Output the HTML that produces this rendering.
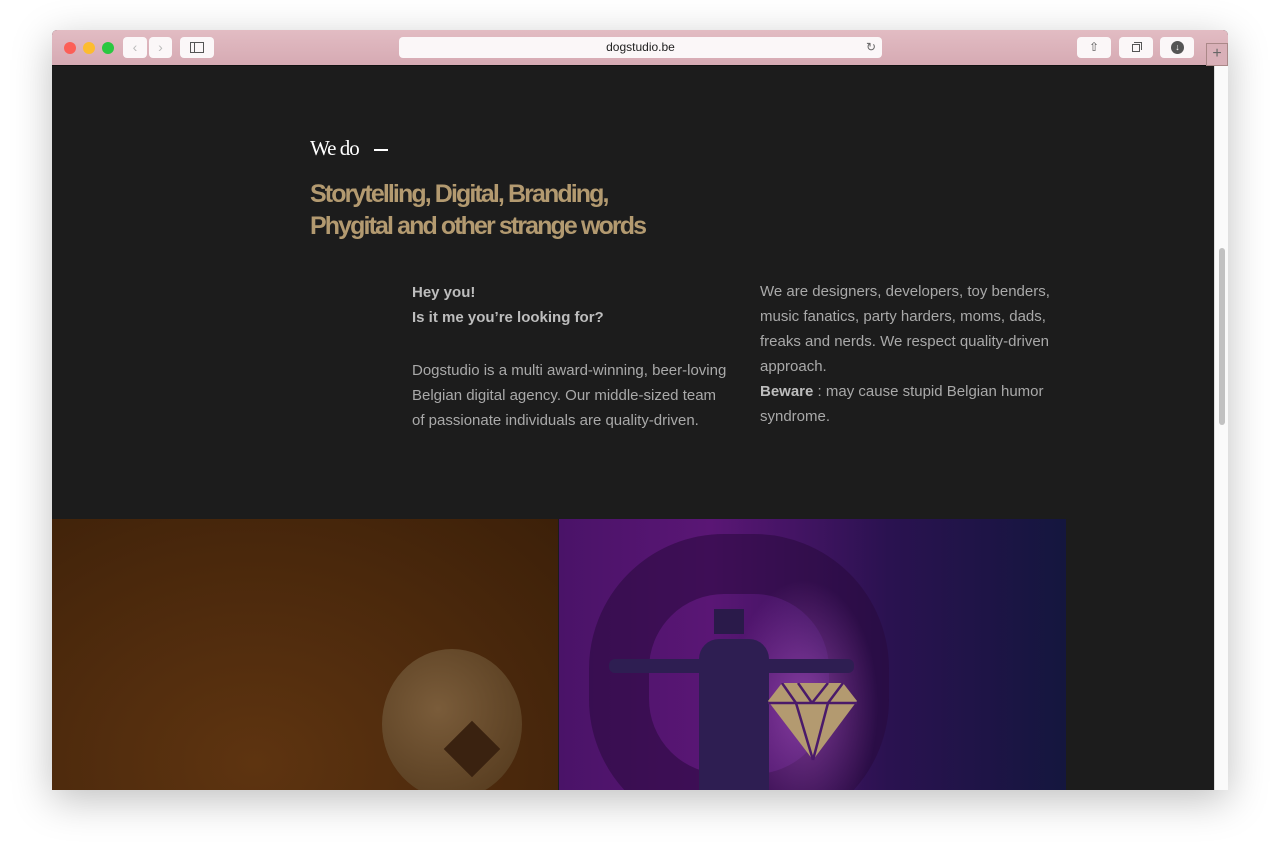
<!DOCTYPE html>
<html><head><meta charset="utf-8"><style>
*{margin:0;padding:0;box-sizing:border-box}
body{width:1280px;height:864px;background:#fff;position:relative;overflow:hidden;font-family:"Liberation Sans",sans-serif}
.win{position:absolute;left:52px;top:30px;width:1176px;height:760px;box-shadow:0 10px 40px rgba(0,0,0,.25);border-radius:5px 5px 0 0;overflow:hidden;background:#1c1c1c}
.bar{position:absolute;left:0;top:0;width:1176px;height:36px;background:linear-gradient(#e2bcc3,#d6aab3);border-bottom:1px solid #111}
.dot{position:absolute;top:12px;width:12px;height:12px;border-radius:50%}
.btn{position:absolute;top:7px;height:21px;background:#fbf7f8;border-radius:4px}
.url{position:absolute;left:347px;top:7px;width:483px;height:21px;background:#fbf7f8;border-radius:4px;font-size:12px;text-align:center;line-height:21px;color:#222}
.content{position:absolute;left:0;top:36px;width:1162px;height:724px;background:#1c1c1c}
.sb{position:absolute;left:1162px;top:36px;width:14px;height:724px;background:#fafafa;border-left:1px solid #ddd}
.thumb{position:absolute;left:4px;top:182px;width:6px;height:177px;border-radius:3px;background:#c1c1c1}
.wedo{position:absolute;left:258px;top:70px;font-family:"Liberation Serif",serif;font-size:21px;color:#fff;letter-spacing:-1px}
.dash{position:absolute;left:322px;top:83px;width:14px;height:2px;background:#fff}
.h{position:absolute;left:258px;top:112px;font-size:25px;font-weight:bold;color:#b39a70;line-height:32px;letter-spacing:-1.9px}
.p{position:absolute;font-size:15px;line-height:25px;color:#a9a9a9}
.p b{color:#bdbdbd}
</style></head><body>
<div class="win">
<div class="bar">
<div class="dot" style="left:12px;background:#fc5f57"></div>
<div class="dot" style="left:31px;background:#fdbc2e"></div>
<div class="dot" style="left:50px;background:#29c840"></div>
<div class="btn" style="left:71px;width:24px;color:#bbb;font-size:14px;text-align:center;line-height:21px">‹</div>
<div class="btn" style="left:97px;width:23px;color:#bbb;font-size:14px;text-align:center;line-height:21px">›</div>
<div class="btn" style="left:128px;width:34px"><div style="position:absolute;left:10px;top:5px;width:14px;height:11px;border:1px solid #555"></div><div style="position:absolute;left:14px;top:5px;width:1px;height:11px;background:#555"></div></div>
<div class="url">dogstudio.be<span style="position:absolute;right:6px;color:#666">↻</span></div>
<div class="btn" style="left:1025px;width:34px;text-align:center;color:#555;font-size:12px;line-height:21px">⇧</div>
<div class="btn" style="left:1067px;width:34px"><div style="position:absolute;left:13px;top:7px;width:8px;height:8px;border:1px solid #555"></div><div style="position:absolute;left:15px;top:5px;width:8px;height:8px;border-top:1px solid #555;border-right:1px solid #555"></div></div>
<div class="btn" style="left:1108px;width:34px"><div style="position:absolute;left:11px;top:4px;width:13px;height:13px;border-radius:50%;background:#555;color:#fff;font-size:9px;text-align:center;line-height:13px">↓</div></div>
<div style="position:absolute;left:1154px;top:13px;width:22px;height:23px;border:1px solid #a88;background:#d9b0b8;color:#666;font-size:16px;text-align:center;line-height:20px">+</div>
</div>
<div class="content">
<div class="wedo">We do</div><div class="dash"></div>
<div class="h">Storytelling, Digital, Branding,<br>Phygital and other strange words</div>
<div class="p" style="left:360px;top:214px;width:330px"><b>Hey you!<br>Is it me you’re looking for?</b><br><br><span style="display:block;margin-top:3px">Dogstudio is a multi award-winning, beer-loving Belgian digital agency. Our middle-sized team<br>of passionate individuals are quality-driven.</span></div>
<div class="p" style="left:708px;top:213px;width:300px">We are designers, developers, toy benders, music fanatics, party harders, moms, dads, freaks and nerds. We respect quality-driven approach.<br><b>Beware</b> : may cause stupid Belgian humor syndrome.</div>
<div style="position:absolute;left:0;top:453px;width:506px;height:271px;background:radial-gradient(ellipse at 40% 90%,#5e3410,#4a280c 60%,#3c2009)">
<div style="position:absolute;left:330px;top:130px;width:140px;height:150px;border-radius:50%;background:radial-gradient(circle at 40% 40%,#7a5c3a,#50361a)"></div>
<div style="position:absolute;left:400px;top:210px;width:40px;height:40px;transform:rotate(45deg);background:#3a2210"></div>
</div>
<div style="position:absolute;left:507px;top:453px;width:507px;height:271px;background:linear-gradient(90deg,#4a1368 0%,#5a1675 30%,#2a1250 65%,#14163e 100%);overflow:hidden">
<div style="position:absolute;left:30px;top:15px;width:300px;height:300px;border-radius:45%;border:60px solid rgba(40,10,60,.55)"></div>
<div style="position:absolute;left:170px;top:60px;width:150px;height:211px;background:radial-gradient(ellipse at 50% 60%,rgba(200,100,220,.5),transparent 70%)"></div>
<div style="position:absolute;left:155px;top:90px;width:30px;height:25px;background:#2a1a4a"></div>
<div style="position:absolute;left:140px;top:120px;width:70px;height:151px;background:#2e1e52;border-radius:20px 20px 0 0"></div>
<div style="position:absolute;left:50px;top:140px;width:245px;height:14px;background:#2e1e52;border-radius:6px"></div>
<svg style="position:absolute;left:209px;top:164px" width="90" height="78" viewBox="0 0 90 78"><polygon points="0,18 14,0 75,0 89,18 45,77" fill="#b39a70"/><g stroke="#4a1a6a" stroke-width="2.5" fill="none"><line x1="0" y1="20" x2="89" y2="20"/><line x1="14" y1="0" x2="28" y2="20"/><line x1="30" y1="0" x2="44" y2="20"/><line x1="60" y1="0" x2="44" y2="20"/><line x1="75" y1="0" x2="60" y2="20"/><line x1="28" y1="20" x2="45" y2="77"/><line x1="60" y1="20" x2="45" y2="77"/></g></svg>
</div>
</div>
<div class="sb"><div class="thumb"></div></div>
</div>
</body></html>
